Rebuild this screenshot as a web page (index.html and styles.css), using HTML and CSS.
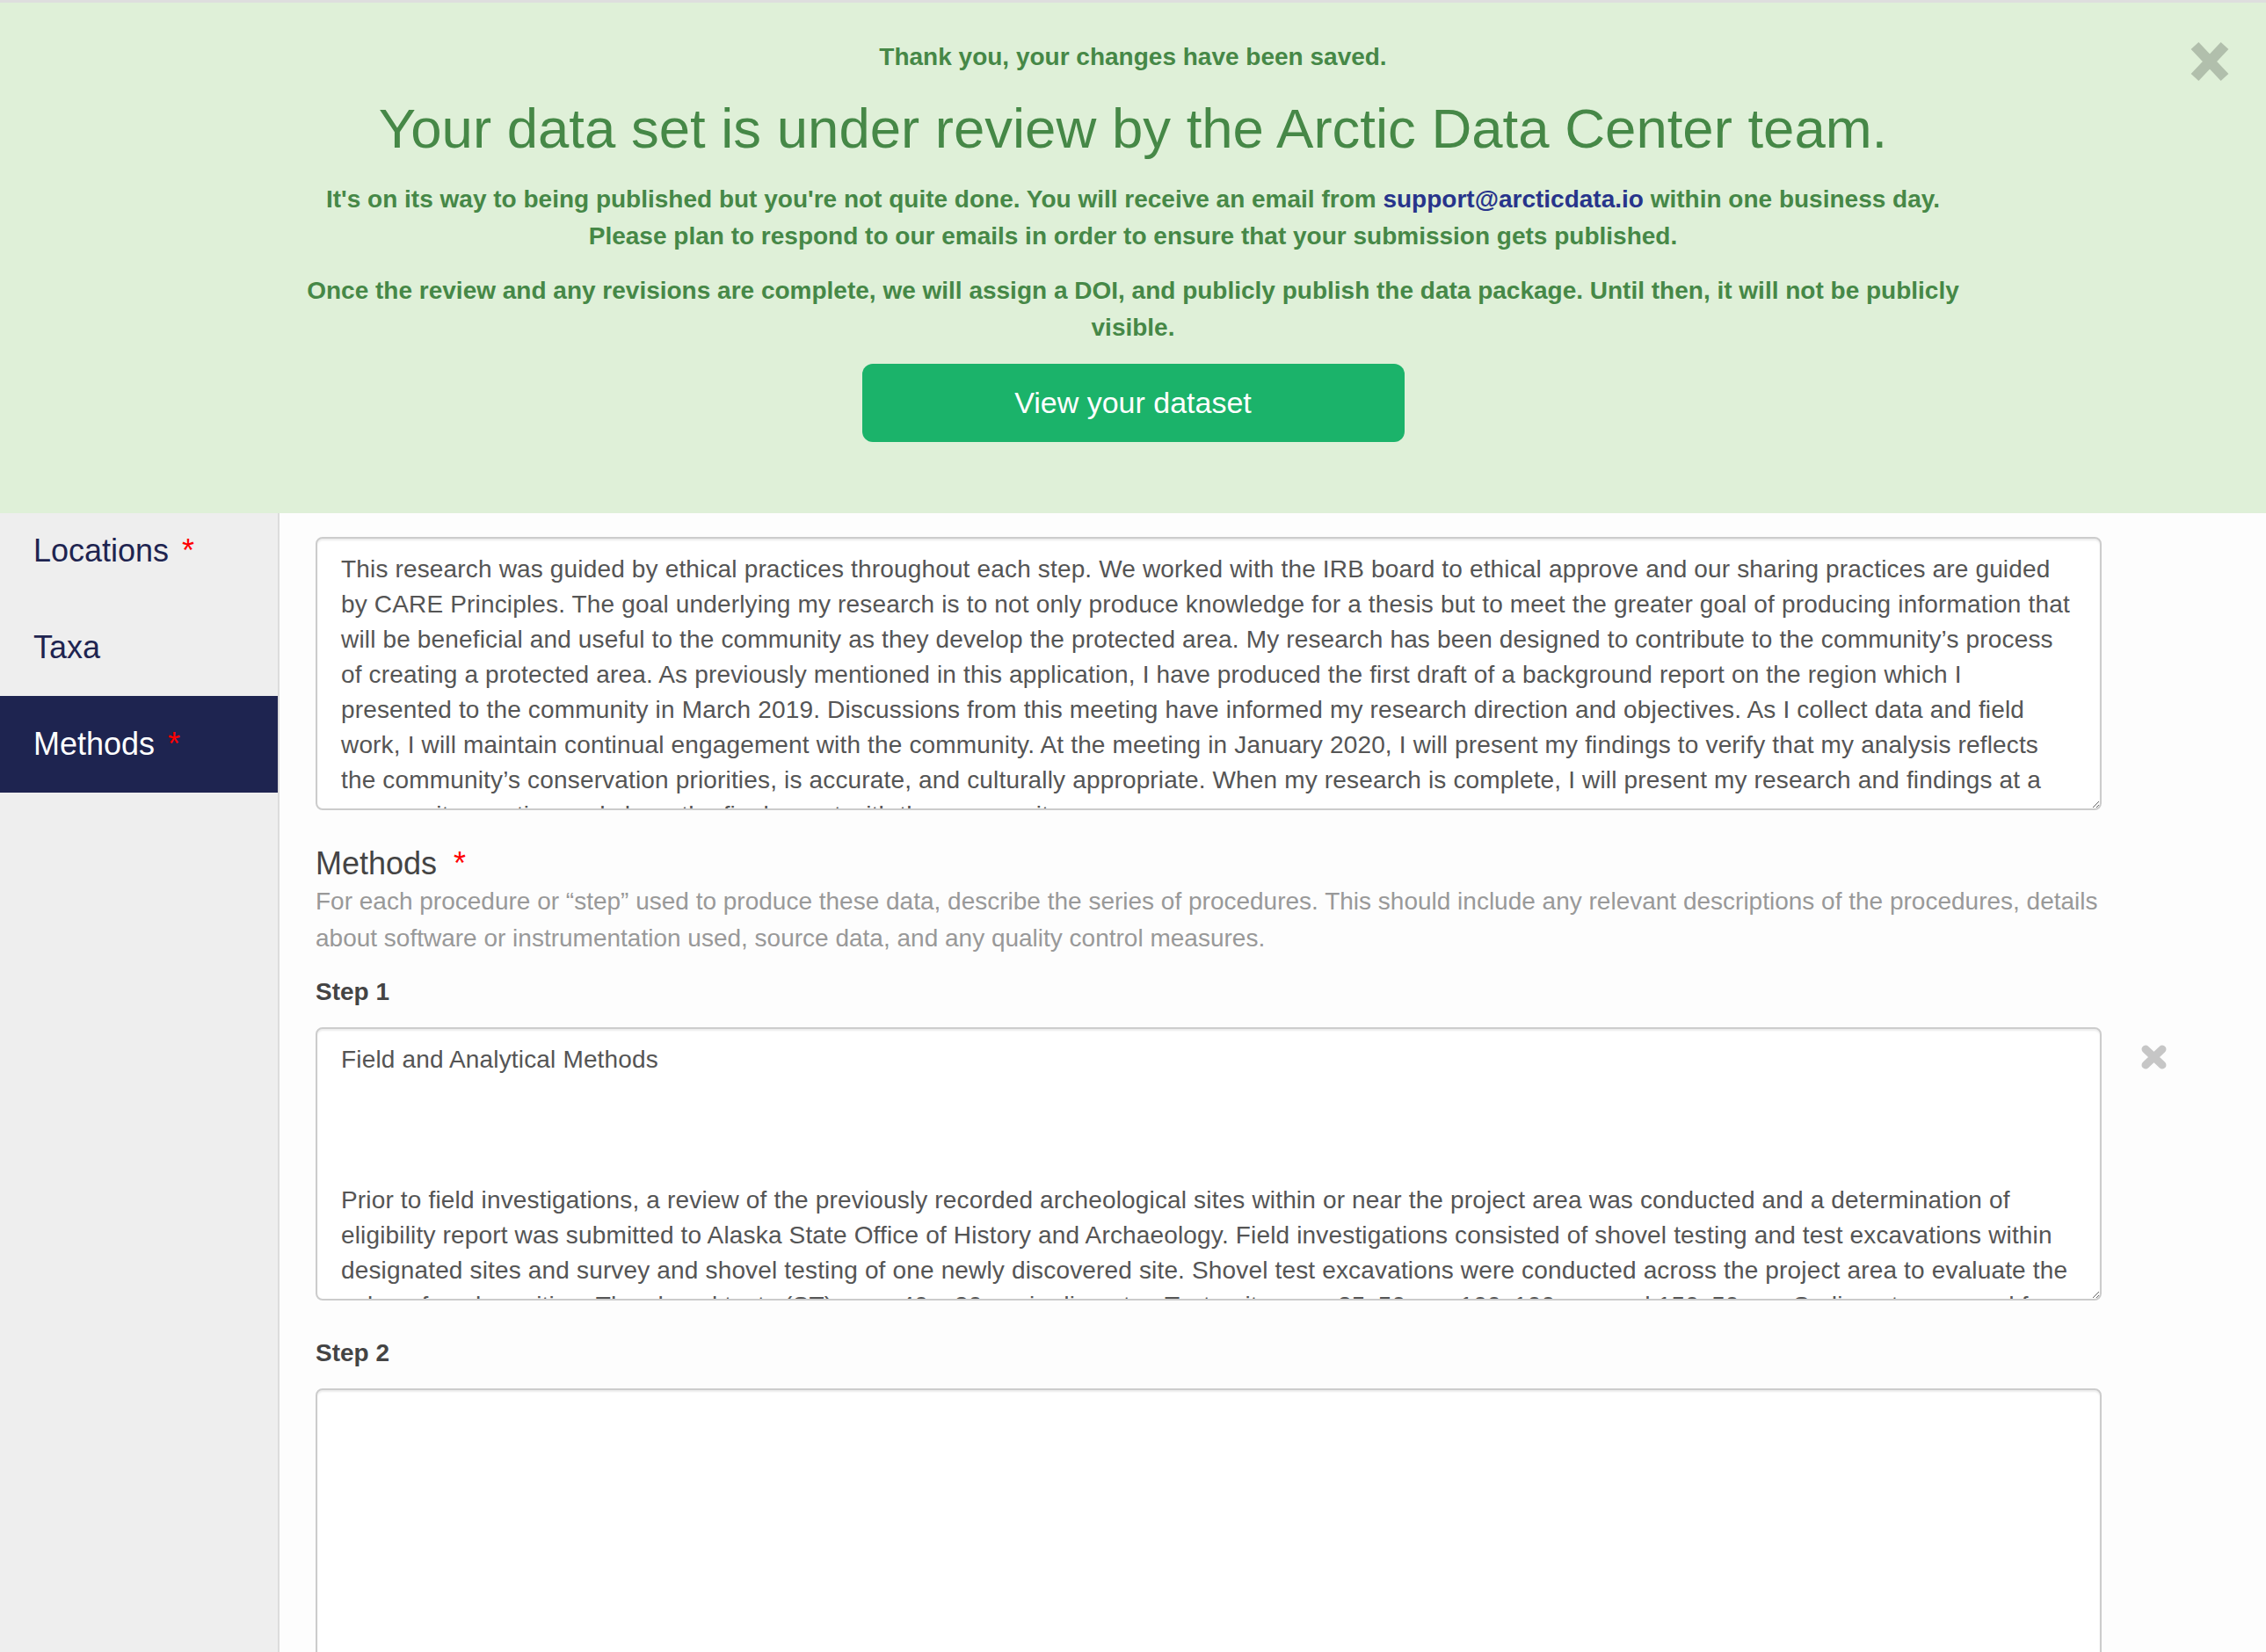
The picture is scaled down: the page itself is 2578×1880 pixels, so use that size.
FILE: index.html
```html
<!DOCTYPE html>
<html lang="en">

<head>
    <meta charset="UTF-8">
    <meta name="viewport" content="width=device-width, initial-scale=1.0">
    <title>Methods</title>
    <link rel="stylesheet" href="styles.css">
</head>

<body>
    <div class="saved-banner">
        <a class="close" href="#" title="Close">
            <svg width="44" height="46" viewBox="0 0 44 46">
                <path d="M5 5 L39 41 M39 5 L5 41" stroke="currentColor" stroke-width="12" fill="none" />
            </svg>
        </a>
        <div class="banner-text">
            <p class="saved">Thank you, your changes have been saved.</p>
            <h2>Your data set is under review by the Arctic Data Center team.</h2>
            <p>It's on its way to being published but you're not quite done. You will receive an email from <a href="mailto:support@arcticdata.io">support@arcticdata.io</a> within one business day.<br>Please plan to respond to our emails in order to ensure that your submission gets published.</p>
            <p>Once the review and any revisions are complete, we will assign a DOI, and publicly publish the data package. Until then, it will not be publicly visible.</p>
            <a class="btn-view" href="#">View your dataset</a>
        </div>
    </div>

    <div class="editor">
        <ul class="section-nav">
            <li>Locations<span class="required">*</span></li>
            <li>Taxa</li>
            <li class="active">Methods<span class="required">*</span></li>
        </ul>

        <div class="form">
            <textarea class="text-field">This research was guided by ethical practices throughout each step. We worked with the IRB board to ethical approve and our sharing practices are guided by CARE Principles. The goal underlying my research is to not only produce knowledge for a thesis but to meet the greater goal of producing information that will be beneficial and useful to the community as they develop the protected area. My research has been designed to contribute to the community’s process of creating a protected area. As previously mentioned in this application, I have produced the first draft of a background report on the region which I presented to the community in March 2019. Discussions from this meeting have informed my research direction and objectives. As I collect data and field work, I will maintain continual engagement with the community. At the meeting in January 2020, I will present my findings to verify that my analysis reflects the community’s conservation priorities, is accurate, and culturally appropriate. When my research is complete, I will present my research and findings at a community meeting and share the final report with the community.</textarea>

            <h4>Methods<span class="required">*</span></h4>
            <p class="help">For each procedure or “step” used to produce these data, describe the series of procedures. This should include any relevant descriptions of the procedures, details about software or instrumentation used, source data, and any quality control measures.</p>

            <label class="step-label">Step 1</label>
            <div class="step">
                <textarea class="text-field">Field and Analytical Methods



Prior to field investigations, a review of the previously recorded archeological sites within or near the project area was conducted and a determination of eligibility report was submitted to Alaska State Office of History and Archaeology. Field investigations consisted of shovel testing and test excavations within designated sites and survey and shovel testing of one newly discovered site. Shovel test excavations were conducted across the project area to evaluate the value of each position. The shovel tests (ST) were 40 x 30 cm in diameter. Test units were 25x50 cm, 100x100 cm, and 150x50 cm. Sediments removed from each unit were screened.</textarea>
                <a class="remove" href="#" title="Remove this step">
                    <svg width="33" height="32" viewBox="0 0 33 32">
                        <path d="M7 7 L26 25 M26 7 L7 25" stroke="currentColor" stroke-width="9" stroke-linecap="round" fill="none" />
                    </svg>
                </a>
            </div>

            <label class="step-label">Step 2</label>
            <div class="step">
                <textarea class="text-field"></textarea>
            </div>
        </div>
    </div>
</body>

</html>
```

FILE: styles.css
```css
body {
    margin: 0;
    font-family: "Liberation Sans", Arial, sans-serif;
    background-color: #fdfdfd;
}

.saved-banner {
    position: relative;
    z-index: 1;
    border-top: 3px solid #dedede;
    background-color: #dff0d8;
    color: #468847;
    text-align: center;
    padding: 42px 0 81px;
}

.close {
    position: absolute;
    top: 44px;
    right: 42px;
    color: #000;
    opacity: 0.2;
}

.close svg {
    display: block;
}

.banner-text {
    width: 1900px;
    margin: 0 auto;
    font-size: 28px;
    font-weight: bold;
    line-height: 42px;
}

.banner-text p {
    margin: 0 0 20px;
}

.banner-text .saved {
    margin: 0;
    line-height: 40px;
}

.banner-text a {
    color: #27348b;
    text-decoration: none;
}

.banner-text h2 {
    margin: 21px 0 20px;
    font-size: 63.5px;
    font-weight: normal;
    line-height: 80px;
}

.banner-text .btn-view {
    display: block;
    width: 617px;
    height: 89px;
    margin: 1px auto 0;
    background-color: #1bb36a;
    color: #fff;
    border-radius: 12px;
    font-size: 34px;
    font-weight: normal;
    line-height: 89px;
}

.editor {
    display: flex;
}

.section-nav {
    width: 316px;
    flex-shrink: 0;
    margin: 0;
    padding: 0;
    list-style: none;
    background-color: #eee;
    border-right: 2px solid #dcdcdc;
    overflow: hidden;
}

.section-nav li {
    height: 110px;
    line-height: 110px;
    padding-left: 38px;
    font-size: 36px;
    color: #1e2450;
}

.section-nav li:first-child {
    margin-top: -12px;
}

.section-nav li.active {
    background-color: #1e2450;
    color: #fff;
}

.required {
    color: #f00;
    margin-left: 15px;
}

.form {
    flex: 1;
    padding: 27px 0 0 41px;
}

.text-field {
    display: block;
    box-sizing: border-box;
    width: 2032px;
    height: 311px;
    margin: 0;
    padding: 15px 30px 13px 27px;
    border: 2px solid #ccc;
    border-radius: 8px;
    box-shadow: inset 0 2px 2px rgba(0, 0, 0, 0.075);
    background-color: #fff;
    color: #555;
    font-family: "Liberation Sans", Arial, sans-serif;
    font-size: 28px;
    line-height: 40px;
    letter-spacing: 0.16px;
    overflow: hidden;
    resize: vertical;
}

.form h4 {
    margin: 41px 0 2px;
    font-size: 36px;
    font-weight: normal;
    line-height: 40px;
    color: #444;
}

.form h4 .required {
    margin-left: 19px;
}

.help {
    width: 2060px;
    margin: 0 0 20px;
    font-size: 28px;
    line-height: 42px;
    color: #999;
}

.step-label {
    display: block;
    margin-bottom: 20px;
    font-size: 28px;
    font-weight: bold;
    line-height: 40px;
    color: #444;
}

.step {
    display: flex;
    align-items: flex-start;
    margin-bottom: 40px;
}

.remove {
    margin: 18px 0 0 43px;
    color: #c6c6c6;
}

.remove svg {
    display: block;
}
```
